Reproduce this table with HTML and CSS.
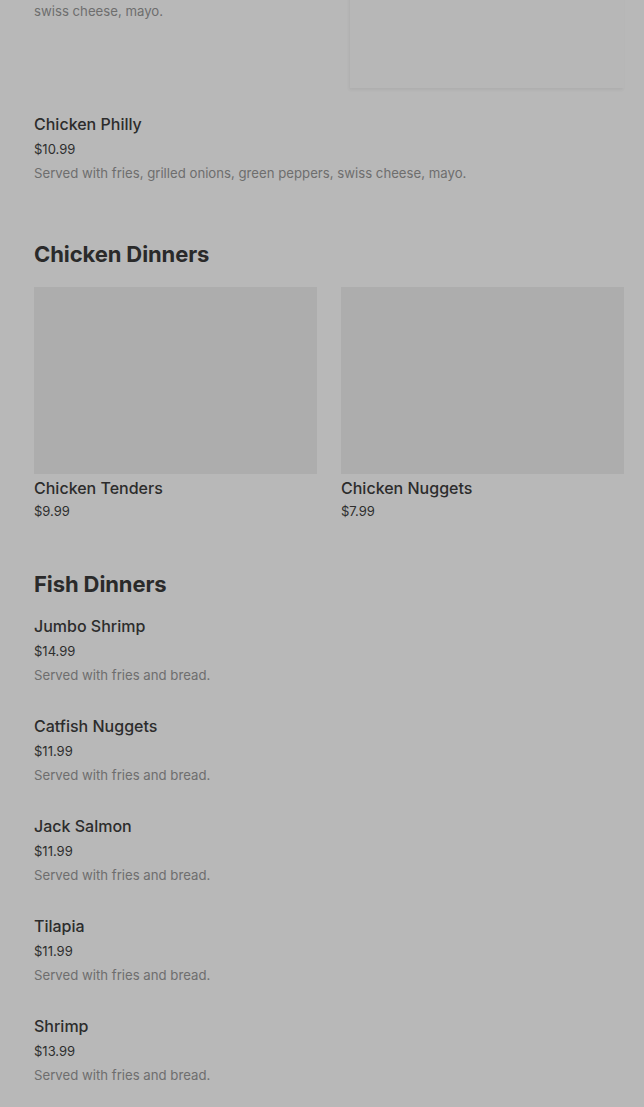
FILE: index.html
```html
<!DOCTYPE html>
<html lang="en">
<head>
  <meta charset="UTF-8">
  <meta name="viewport" content="width=device-width, initial-scale=1.0">
  <title>Menu</title>
  <link rel="stylesheet" href="styles.css">
</head>
<body>
<div class="menu">

  <section class="section first">
    <div class="item item-photo">
      <div class="item-text">
        <div class="item-name">Philly Cheese Steak</div>
        <div class="item-price">$10.99</div>
        <div class="item-desc">Served with fries, grilled onions, green peppers, swiss cheese, mayo.</div>
      </div>
      <div class="item-img"></div>
    </div>
    <div class="item">
      <div class="item-name">Chicken Philly</div>
      <div class="item-price">$10.99</div>
      <div class="item-desc">Served with fries, grilled onions, green peppers, swiss cheese, mayo.</div>
    </div>
  </section>

  <section class="section">
    <h2>Chicken Dinners</h2>
    <div class="cards">
      <div class="card">
        <div class="card-img"></div>
        <div class="item-name">Chicken Tenders</div>
        <div class="card-price">$9.99</div>
      </div>
      <div class="card">
        <div class="card-img"></div>
        <div class="item-name">Chicken Nuggets</div>
        <div class="card-price">$7.99</div>
      </div>
    </div>
  </section>

  <section class="section fish">
    <h2>Fish Dinners</h2>
    <div class="item">
      <div class="item-name">Jumbo Shrimp</div>
      <div class="item-price">$14.99</div>
      <div class="item-desc">Served with fries and bread.</div>
    </div>
    <div class="item">
      <div class="item-name">Catfish Nuggets</div>
      <div class="item-price">$11.99</div>
      <div class="item-desc">Served with fries and bread.</div>
    </div>
    <div class="item">
      <div class="item-name">Jack Salmon</div>
      <div class="item-price">$11.99</div>
      <div class="item-desc">Served with fries and bread.</div>
    </div>
    <div class="item">
      <div class="item-name">Tilapia</div>
      <div class="item-price">$11.99</div>
      <div class="item-desc">Served with fries and bread.</div>
    </div>
    <div class="item">
      <div class="item-name">Shrimp</div>
      <div class="item-price">$13.99</div>
      <div class="item-desc">Served with fries and bread.</div>
    </div>
  </section>

</div>
</body>
</html>
```

FILE: styles.css
```css
body {
  margin: 0;
  background-color: #B8B8B8;
  color: #2C2C2C;
  font-family: Inter, "Noto Sans", sans-serif;
  overflow: hidden;
}
.menu {
  padding: 0 20px 0 34px;
}
.section {
  display: flex;
  flex-direction: column;
}
.section.first {
  margin-top: -74px;
}
h2 {
  margin: 0;
  font-size: 22px;
  line-height: 28px;
  font-weight: 700;
  letter-spacing: -0.1px;
  color: #2A2A2A;
}
.item {
  display: flex;
  flex-direction: column;
  margin-bottom: 27px;
}
.item-photo {
  flex-direction: row;
  gap: 8px;
  margin-bottom: 24px;
}
.item-text {
  flex: 1;
  display: flex;
  flex-direction: column;
}
.item-img {
  width: 274px;
  height: 162px;
  background-color: #B7B7B7;
  box-shadow: -1px 2px 3px rgba(0, 0, 0, 0.06);
}
.item-name {
  font-size: 16px;
  line-height: 24px;
  font-weight: 500;
  color: #2C2C2C;
}
.item-price {
  font-size: 13px;
  line-height: 24px;
  color: #2E2E2E;
  margin-top: 1px;
}
.item-desc {
  font-size: 13.2px;
  line-height: 24px;
  color: #6E6E6E;
}
.section + .section {
  margin-top: 28px;
}
.section h2 {
  margin-bottom: 19px;
}
.cards {
  display: flex;
  gap: 24px;
}
.card {
  flex: 1;
  display: flex;
  flex-direction: column;
}
.card-img {
  height: 187px;
  background-color: #ADADAD;
  margin-bottom: 3px;
}
.card .item-name {
  line-height: 22px;
}
.card-price {
  font-size: 13px;
  line-height: 24px;
  color: #2E2E2E;
}
.section.fish {
  margin-top: 47px;
}
.section.fish h2 {
  margin-bottom: 16px;
}
```
